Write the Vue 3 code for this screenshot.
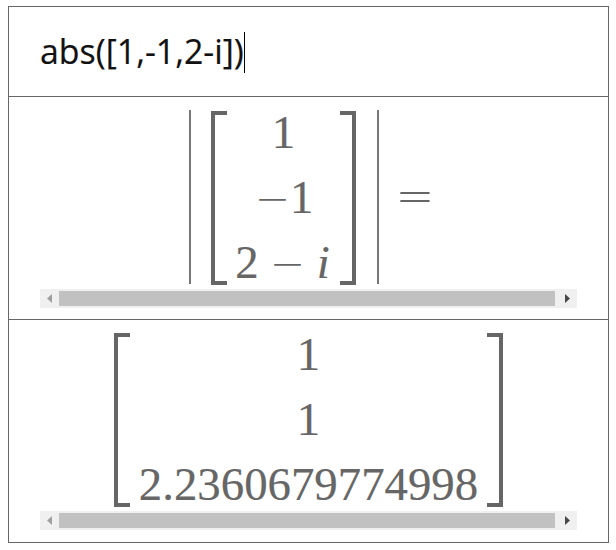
<script setup>
const expression = 'abs([1,-1,2-i])'
const result = ['1', '1', '2.2360679774998']
</script>

<template>
  <main class="calculator">
    <section class="entry">
      <span class="expression">{{ expression }}</span><span class="caret"></span>
    </section>
    <section class="panel input-panel">
      <div class="formula">
        <span class="bar"></span>
        <span class="bracket left"></span>
        <div class="column">
          <div class="row">1</div>
          <div class="row"><span class="minus unary">−</span>1</div>
          <div class="row">2<span class="minus">−</span><i>i</i></div>
        </div>
        <span class="bracket right"></span>
        <span class="bar"></span>
        <span class="equals">=</span>
      </div>
      <div class="scrollbar">
        <svg class="arrow" viewBox="0 0 5 9"><path d="M5 0V9L0 4.5Z" fill="#a0a0a0" /></svg>
        <span class="thumb"></span>
        <svg class="arrow" viewBox="0 0 5 9"><path d="M0 0V9L5 4.5Z" fill="#484848" /></svg>
      </div>
    </section>
    <section class="panel result-panel">
      <div class="formula">
        <span class="bracket left"></span>
        <div class="column">
          <div v-for="(value, index) in result" :key="index" class="row">{{ value }}</div>
        </div>
        <span class="bracket right"></span>
      </div>
      <div class="scrollbar">
        <svg class="arrow" viewBox="0 0 5 9"><path d="M5 0V9L0 4.5Z" fill="#a0a0a0" /></svg>
        <span class="thumb"></span>
        <svg class="arrow" viewBox="0 0 5 9"><path d="M0 0V9L5 4.5Z" fill="#484848" /></svg>
      </div>
    </section>
  </main>
</template>

<style>
body {
  background: #fff;
}
#app {
  display: flow-root;
}
</style>

<style scoped>
.calculator {
  box-sizing: border-box;
  width: 601px;
  height: 537px;
  margin: 6px 0 0 8px;
  border: 1px solid #666;
}
.entry {
  display: flex;
  align-items: center;
  height: 89px;
  padding-left: 31px;
  color: #111;
  font: 35px/40px "Open Sans", sans-serif;
}
.expression {
  width: 204px;
  margin-top: -1px;
  white-space: nowrap;
  transform: scaleX(0.968);
  transform-origin: 0 50%;
  -webkit-text-stroke: 0.2px #111;
}
.caret {
  width: 1px;
  height: 41px;
  margin-top: 1px;
  background: #000;
}
.panel {
  border-top: 1px solid #666;
  color: #666;
  font: 46.8px/65px "Liberation Serif", serif;
}
.formula {
  display: flex;
}
.input-panel {
  height: 222px;
}
.input-panel .formula {
  height: 192px;
  padding-left: 180px;
}
.result-panel .formula {
  height: 191px;
  padding-left: 105px;
}
.bar {
  width: 2px;
  height: 174px;
  margin-top: 13px;
  background: #777;
}
.bracket {
  box-sizing: border-box;
  width: 16px;
  height: 174px;
  margin-top: 14px;
  border: 4px solid #666;
}
.result-panel .bracket {
  margin-top: 13px;
}
.bracket.left {
  border-right: 0;
}
.bracket.right {
  border-left: 0;
}
.input-panel .left {
  margin-left: 20px;
}
.input-panel .right {
  margin-right: 21px;
}
.column {
  display: flex;
  flex-direction: column;
  width: 113px;
  padding-top: 3px;
}
.result-panel .column {
  width: 357px;
  padding-top: 2px;
}
.row {
  flex: none;
  height: 65px;
  text-align: center;
  white-space: nowrap;
  -webkit-text-stroke: 0.2px #666;
}
.minus {
  display: inline-block;
  width: 36.4px;
  margin: 0 10.4px;
  transform: translateY(1px) scale(1.22, 0.72);
  transform-origin: 50% 55%;
  -webkit-text-stroke: 0;
}
.minus.unary {
  margin: 0;
}
.row i {
  display: inline-block;
  width: 16px;
  text-indent: -1px;
}
.equals {
  width: 36px;
  margin: 68px 0 0 18px;
  text-align: center;
  height: 65px;
  transform: scale(1.34, 0.8);
}
.scrollbar {
  box-sizing: border-box;
  display: flex;
  align-items: center;
  width: 537px;
  height: 19px;
  margin-left: 31px;
  padding: 0 7px;
  background: #f0f0f0;
}
.arrow {
  flex: none;
  width: 5px;
  height: 9px;
}
.thumb {
  width: 496px;
  height: 15px;
  margin: 0 10px 0 7px;
  background: #c1c1c1;
}
</style>
